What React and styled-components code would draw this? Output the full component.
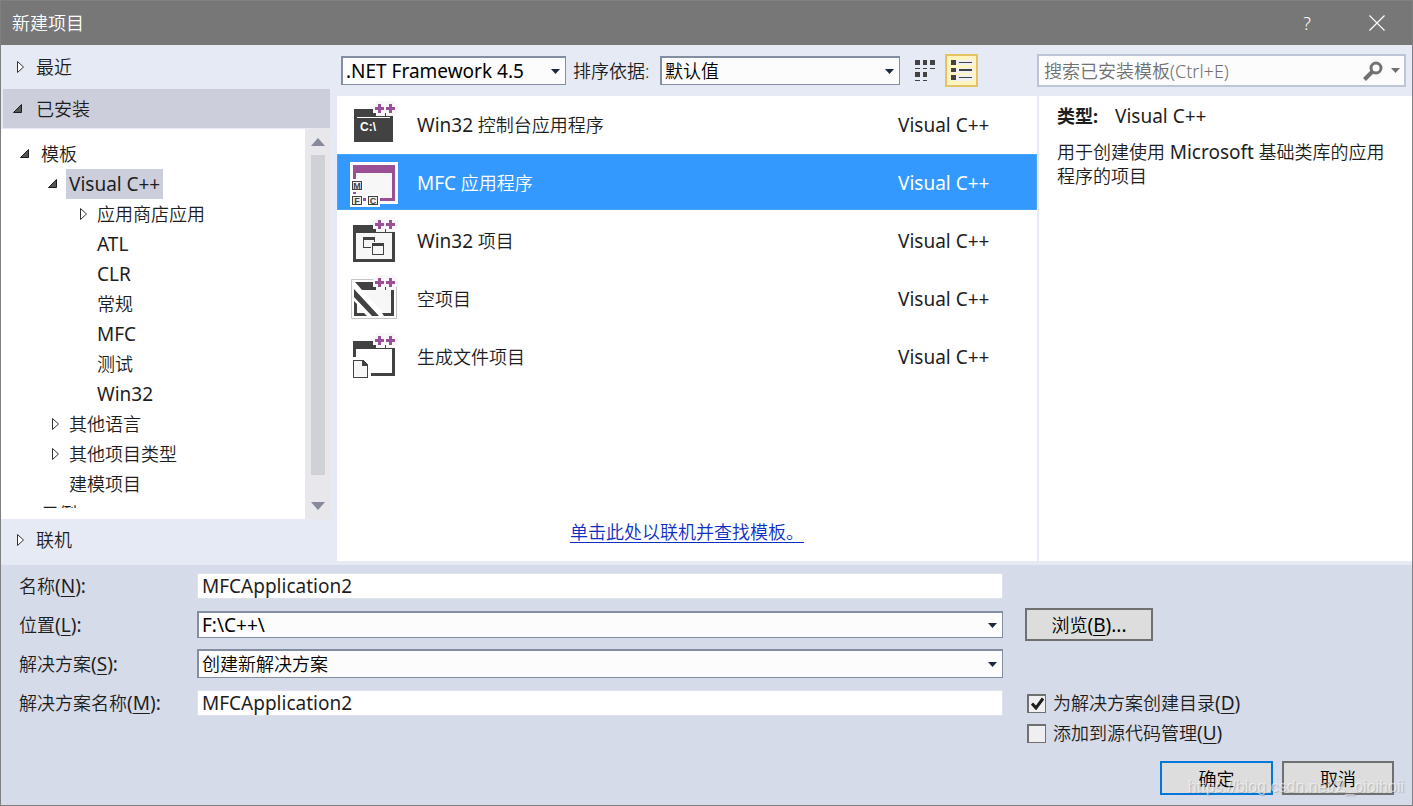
import React from 'react'
import styled, { createGlobalStyle } from 'styled-components'


const GlobalStyle = createGlobalStyle`
  * {
    box-sizing: border-box;
  }

  body {
    margin: 0;
    background: #d5dbe9;
    color: #1e1e1e;
    font-family: "Noto Sans", "Noto Sans CJK SC", sans-serif;
    font-size: 18px;
    font-weight: 350;
    line-height: 24px;
  }

  button, input, select {
    margin: 0;
    font: inherit;
    color: inherit;
  }

  u {
    text-underline-offset: 3px;
    text-decoration-thickness: 1px;
  }
`

const Dialog = styled.div`
  position: relative;
  display: flex;
  flex-direction: column;
  height: 100vh;
  min-height: 640px;
  min-width: 1100px;
  border: 1px solid #808080;
  background: #e6eaf5;
`

const TitleBar = styled.header`
  display: flex;
  align-items: center;
  flex: 0 0 44px;
  padding-left: 11px;
  background: #777777;
  color: #ffffff;
`

const Title = styled.h1`
  flex: 1;
  margin: 0;
  font-size: 18px;
  font-weight: inherit;
`

const TitleButton = styled.button`
  display: flex;
  align-items: center;
  justify-content: center;
  width: 70px;
  height: 44px;
  padding: 0;
  border: none;
  background: none;
  color: #ffffff;
`

const Main = styled.main`
  display: grid;
  grid-template-columns: 336px 1fr 375px;
  flex: 1;
  min-height: 0;
  padding-bottom: 4px;
`

const Sidebar = styled.nav`
  display: flex;
  flex-direction: column;
  min-height: 0;
  padding-right: 6px;
`

const Section = styled.button`
  display: flex;
  align-items: center;
  flex: 0 0 ${({ $height }) => $height}px;
  gap: 11px;
  margin: 0 1px 0 2px;
  padding: 0 0 0 8px;
  border: none;
  background: ${({ $open }) => ($open ? '#cccedb' : 'transparent')};
  text-align: left;
`

const TreePane = styled.div`
  display: flex;
  flex: 1;
  min-height: 0;
  margin-top: 1px;
  background: #ffffff;
`

const Tree = styled.ul`
  flex: 1;
  margin: 0 0 11px;
  padding: 10px 0 0;
  overflow: hidden;
  list-style: none;
`

const TreeItem = styled.li`
  display: flex;
  align-items: center;
  height: 30px;
  padding-left: ${({ $level }) => 17 + $level * 28}px;
`

const TreeLabel = styled.span`
  display: flex;
  align-items: center;
  height: 30px;
  padding: 0 3px;
  margin-left: 6px;
  background: ${({ $active }) => ($active ? '#cccedb' : 'transparent')};
`

const Latin = styled.span`
  font-size: 19px;
  font-weight: 400;
`

const ScrollBar = styled.div`
  display: flex;
  flex-direction: column;
  align-items: center;
  width: 26px;
  background: #e8e8ec;
`

const ScrollThumb = styled.div`
  flex: 1;
  width: 14px;
  background: #d0d1d7;
`

const ScrollArrow = styled.div`
  display: flex;
  align-items: center;
  justify-content: center;
  height: 26px;
  margin-top: ${({ $gap }) => $gap || 0}px;
`

const Column = styled.section`
  display: flex;
  flex-direction: column;
  min-width: 0;
  min-height: 0;
`

const Toolbar = styled.div`
  display: flex;
  align-items: center;
  flex: 0 0 51px;
  padding: 0 6px 0 ${({ $left }) => $left}px;
`

const SelectWrapper = styled.div`
  position: relative;
  display: flex;
  width: ${({ $width }) => $width};
`

const SelectBox = styled.select`
  width: 100%;
  height: ${({ $height }) => $height || 29}px;
  padding: 0 24px 0 3px;
  border: 1px solid #848ea3;
  border-top-width: 2px;
  border-left-width: 2px;
  border-radius: 0;
  outline: none;
  appearance: none;
  background: #fcfcfc;
  color: #000000;
  font-size: ${({ $latin }) => ($latin ? 19 : 18)}px;
  font-weight: ${({ $latin }) => ($latin ? 400 : 350)};
  line-height: 24px;
`

const SelectArrow = styled.svg`
  position: absolute;
  top: 50%;
  right: 6px;
  margin-top: -2px;
  pointer-events: none;
`

const SortLabel = styled.label`
  width: 94px;
  padding-left: 7px;
  white-space: nowrap;
`

const ViewButton = styled.button`
  display: flex;
  align-items: center;
  justify-content: center;
  width: 33px;
  height: 33px;
  margin-left: ${({ $active }) => ($active ? 4 : 8)}px;
  padding: 0;
  border: 2px solid ${({ $active }) => ($active ? '#e5c365' : 'transparent')};
  background: ${({ $active }) => ($active ? '#fdf4bf' : 'transparent')};
`

const SearchBox = styled.div`
  display: flex;
  align-items: center;
  flex: 1;
  height: 33px;
  padding-right: 4px;
  border: 2px solid #bcc5d6;
  background: #fcfcfc;
`

const SearchInput = styled.input`
  flex: 1;
  min-width: 0;
  padding: 0 5px;
  border: none;
  outline: none;
  background: none;

  &::placeholder {
    color: #717171;
    opacity: 1;
  }
`

const SearchButton = styled.button`
  display: flex;
  align-items: center;
  gap: 8px;
  padding: 0;
  border: none;
  background: none;
`

const TemplatePane = styled.div`
  display: flex;
  flex: 1;
  flex-direction: column;
  justify-content: space-between;
  align-items: center;
  background: #ffffff;
`

const TemplateList = styled.ul`
  width: 100%;
  margin: 0;
  padding: 0;
  list-style: none;
`

const TemplateRow = styled.li`
  display: grid;
  grid-template-columns: 48px 1fr 126px;
  align-items: center;
  column-gap: 19px;
  height: 56px;
  margin-bottom: 2px;
  padding: 4px 12px;
  border: 1px solid ${({ $selected }) => ($selected ? '#4aa3ff' : 'transparent')};
  background: ${({ $selected }) => ($selected ? '#3399ff' : 'transparent')};
  color: ${({ $selected }) => ($selected ? '#ffffff' : '#1e1e1e')};
`

const TemplateIcon = styled.svg`
  display: block;
  width: 48px;
  height: 48px;
`

const OnlineLink = styled.a`
  margin-bottom: 17px;
  color: #0e2fc4;
  text-decoration: underline;
  text-decoration-thickness: 1px;
  text-underline-offset: 3px;
`

const Details = styled.div`
  flex: 1;
  margin-left: 2px;
  padding: 8px 18px;
  background: #ffffff;
`

const DetailType = styled.p`
  display: flex;
  gap: 17px;
  margin: 0 0 12px;
`

const DetailText = styled.p`
  margin: 0;
`

const Footer = styled.form`
  flex: none;
  padding: 1px 18px 10px;
  background: #d5dbe9;
`

const Fields = styled.div`
  display: grid;
  grid-template-columns: 178px 1fr 391px;
  grid-template-rows: repeat(4, 39px) 26px;
  align-items: center;
`

const FieldLabel = styled.label`
  grid-column: 1;
`

const FieldCell = styled.div`
  grid-column: 2;
  display: flex;
`

const SideCell = styled.div`
  grid-column: 3;
  grid-row: ${({ $row }) => $row};
  align-self: ${({ $align }) => $align || 'center'};
  padding-left: 22px;
`

const TextBox = styled.input`
  width: 100%;
  height: 26px;
  padding: 0 4px;
  border: 1px solid #dde1ea;
  border-radius: 0;
  outline: none;
  background: #ffffff;
  font-size: 19px;
  font-weight: 400;
  line-height: 24px;
`

const PushButton = styled.button`
  width: ${({ $width }) => $width}px;
  height: ${({ $height }) => $height || 34}px;
  padding: 1px 0 0;
  border: 2px solid ${({ $primary }) => ($primary ? '#0078d7' : '#707070')};
  background: #dddddd;
  color: #000000;
`

const CheckRow = styled.label`
  display: flex;
  align-items: center;
  gap: 7px;
  height: 30px;
  padding-left: 2px;
`

const CheckMark = styled.span`
  position: relative;
  display: flex;
  width: 19px;
  height: 19px;

  svg {
    position: absolute;
    top: 3px;
    left: 4px;
    pointer-events: none;
  }
`

const CheckInput = styled.input`
  width: 19px;
  height: 19px;
  border: 1px solid #707070;
  border-top-width: 2px;
  border-left-width: 2px;
  appearance: none;
  background: #efeff2;
`

const Actions = styled.div`
  display: flex;
  justify-content: flex-end;
  gap: 9px;
  margin-top: 13px;
`

const Watermark = styled.span`
  position: absolute;
  right: 8px;
  bottom: 6px;
  color: rgba(255, 255, 255, 0.55);
  font-family: "Liberation Sans", Arial, sans-serif;
  font-size: 16px;
  text-shadow: 1px 1px 1px rgba(120, 120, 120, 0.4);
  pointer-events: none;
`

const TREE = [
  { label: '模板', level: 0, state: 'open' },
  { label: 'Visual C++', level: 1, state: 'open', active: true },
  { label: '应用商店应用', level: 2, state: 'closed' },
  { label: 'ATL', level: 2 },
  { label: 'CLR', level: 2 },
  { label: '常规', level: 2 },
  { label: 'MFC', level: 2 },
  { label: '测试', level: 2 },
  { label: 'Win32', level: 2 },
  { label: '其他语言', level: 1, state: 'closed' },
  { label: '其他项目类型', level: 1, state: 'closed' },
  { label: '建模项目', level: 1 },
  { label: '示例', level: 0 },
]

// latin letters are set one size up so they sit evenly beside the chinese
const MixedText = ({ text }) =>
  text.split(/([\x21-\x7e]+)/).map((part, i) => (i % 2 ? <Latin key={i}>{part}</Latin> : part))

const Mnemonic = ({ text, letter, end }) => (
  <span>{text}<Latin>(<u>{letter}</u>){end}</Latin></span>
)

const Expander = ({ state }) => (
  <svg width="14" height="14" viewBox="0 0 14 14">
    {state === 'open' && <path d="M10.5 2.5v8h-8z" fill="#555" stroke="#1e1e1e" />}
    {state === 'closed' && <path d="M6.500 1.500v11l6-5.500z" fill="#fff" stroke="#333" />}
  </svg>
)

const Chevron = ({ color = '#1b293e' }) => (
  <SelectArrow width="9" height="5" viewBox="0 0 9 5">
    <path d="M0 0h9L4.500 5z" fill={color} />
  </SelectArrow>
)

const Combo = ({ id, value, width, height, latin, label }) => (
  <SelectWrapper $width={width}>
    <SelectBox id={id} aria-label={label} $height={height} $latin={latin} defaultValue={value}>
      <option>{value}</option>
    </SelectBox>
    <Chevron />
  </SelectWrapper>
)

const Pluses = () => (
  <>
    <path d="M23 3h3V0h9v3h1V0h9v3h3v9h-3v3h-9v-3h-1v3h-9v-3h-3z" fill="#f7f7f7" />
    <path d="M28 3h3v3h3v3h-3v3h-3v-3h-3v-3h3zM39 3h3v3h3v3h-3v3h-3v-3h-3v-3h3z" fill="#9b4f96" />
  </>
)

const ConsoleIcon = () => (
  <TemplateIcon viewBox="0 0 48 48" shapeRendering="crispEdges">
    <path d="M4 8h39v33H4z" fill="#424242" />
    <path d="M7 16h33v1H7z" fill="#fff" />
    <text x="10" y="30" fill="#fff" fontFamily="Liberation Sans" fontWeight="700" fontSize="12">C:\</text>
    <Pluses />
  </TemplateIcon>
)

const MfcLetter = ({ x, y, letter }) => (
  <>
    <path d={`M${x} ${y}h10v9h-10z`} fill="#424242" />
    <path d={`M${x + 1} ${y + 1}h8v7h-8z`} fill="#f0eff1" />
    <text x={x + 5} y={y + 8} textAnchor="middle" fill="#424242" fontFamily="Liberation Sans" fontWeight="700" fontSize="9">{letter}</text>
  </>
)

const MfcIcon = () => (
  <TemplateIcon viewBox="0 0 48 48" shapeRendering="crispEdges">
    <path d="M0 3h48v42H30v3H0z" fill="#fff" />
    <path d="M3 6h42v36H3z" fill="#9b4f96" />
    <path d="M6 14h36v25H6z" fill="#f7f7f7" />
    <path d="M0 20h13v13H0zM0 35h13v13H0zM16 35h14v13H16z" fill="#fff" />
    <MfcLetter x={2} y={22} letter="M" />
    <MfcLetter x={2} y={37} letter="F" />
    <MfcLetter x={18} y={37} letter="C" />
  </TemplateIcon>
)

const Win32Icon = () => (
  <TemplateIcon viewBox="0 0 48 48" shapeRendering="crispEdges">
    <path d="M3 8h42v37H3z" fill="#424242" />
    <path d="M6 16h36v26H6z" fill="#f7f7f7" />
    <path d="M13 20h12v11H13z" fill="#424242" />
    <path d="M14 23h10v7H14z" fill="#f7f7f7" />
    <path d="M21 25h14v14H21z" fill="#f7f7f7" />
    <path d="M22 26h12v12H22z" fill="#424242" />
    <path d="M23 29h10v8H23z" fill="#f7f7f7" />
    <Pluses />
  </TemplateIcon>
)

const EmptyIcon = () => (
  <TemplateIcon viewBox="0 0 48 48">
    <path d="M1.500 4.500h45v39h-45z" fill="#fff" stroke="#c4c4c4" />
    <path d="M5 7h39v34H34l-2-3h9V15H12z" fill="#424242" />
    <path d="M12 15h29v23h-8z" fill="#f7f7f7" />
    <path d="M4 26v15h13l-3-3H7v-9z" fill="#424242" />
    <path d="M7 29v9h7z" fill="#f7f7f7" />
    <path d="M4 14v8l18 19h7z" fill="#424242" />
    <Pluses />
  </TemplateIcon>
)

const MakefileIcon = () => (
  <TemplateIcon viewBox="0 0 48 48" shapeRendering="crispEdges">
    <path d="M3 8h42v35H21v-3h21V16H6v8H3z" fill="#424242" />
    <path d="M3 27h10l5 5v13H3z" fill="#424242" />
    <path d="M4 28h8v5h5v11H4z" fill="#f7f7f7" />
    <Pluses />
  </TemplateIcon>
)

const TEMPLATES = [
  { name: 'Win32 控制台应用程序', Icon: ConsoleIcon },
  { name: 'MFC 应用程序', Icon: MfcIcon, selected: true },
  { name: 'Win32 项目', Icon: Win32Icon },
  { name: '空项目', Icon: EmptyIcon },
  { name: '生成文件项目', Icon: MakefileIcon },
]

const App = () => {
  return (
    <Dialog>
      <GlobalStyle />

      <TitleBar>
        <Title>新建项目</Title>
        <TitleButton type="button" aria-label="帮助">?</TitleButton>
        <TitleButton type="button" aria-label="关闭">
          <svg width="16" height="16" viewBox="0 0 16 16">
            <path d="M.5.5l15 15M15.500.5l-15 15" stroke="#fff" strokeWidth="1.200" />
          </svg>
        </TitleButton>
      </TitleBar>

      <Main>
        <Sidebar>
          <Section type="button" $height={44}><Expander state="closed" />最近</Section>
          <Section type="button" $height={39} $open><Expander state="open" />已安装</Section>
          <TreePane>
            <Tree>
              {TREE.map(({ label, level, state, active }) => (
                <TreeItem key={label} $level={level}>
                  <Expander state={state} />
                  <TreeLabel $active={active}>
                    <span><MixedText text={label} /></span>
                  </TreeLabel>
                </TreeItem>
              ))}
            </Tree>
            <ScrollBar>
              <ScrollArrow>
                <svg width="14" height="8" viewBox="0 0 14 8"><path d="M0 8l7-8 7 8z" fill="#868999" /></svg>
              </ScrollArrow>
              <ScrollThumb />
              <ScrollArrow $gap={18}>
                <svg width="14" height="8" viewBox="0 0 14 8"><path d="M0 0l7 8 7-8z" fill="#868999" /></svg>
              </ScrollArrow>
            </ScrollBar>
          </TreePane>
          <Section type="button" $height={42}><Expander state="closed" />联机</Section>
        </Sidebar>

        <Column>
          <Toolbar $left={4}>
            <Combo label="框架" value=".NET Framework 4.5" width="225px" latin />
            <SortLabel htmlFor="sort">排序依据:</SortLabel>
            <Combo id="sort" value="默认值" width="240px" />
            <ViewButton type="button" aria-label="小图标">
              <svg width="20" height="21" viewBox="0 0 20 21" shapeRendering="crispEdges">
                <path d="M0 0h5v5H0zM8 0h4v5H8zM15 0h5v5h-5zM0 8h5v1H0zM8 8h4v1H8zM15 8h5v1h-5zM0 12h5v5H0zM8 12h4v5H8zM0 20h5v1H0zM8 20h4v1H8z" fill="#424242" />
              </svg>
            </ViewButton>
            <ViewButton type="button" aria-label="列表" $active>
              <svg width="21" height="21" viewBox="0 0 21 21" shapeRendering="crispEdges" overflow="visible">
                <path d="M0 0h23v5H0zM0 8h23v5H0zM0 15h23v6H0z" fill="#f0eff1" />
                <path d="M0 0h5v5H0zM0 8h5v4H0zM0 15h5v5H0zM8 2h13v1H8zM8 9h13v2H8zM8 17h13v1H8z" fill="#424242" />
              </svg>
            </ViewButton>
          </Toolbar>
          <TemplatePane>
            <TemplateList>
              {TEMPLATES.map(({ name, Icon, selected }) => (
                <TemplateRow key={name} $selected={selected}>
                  <Icon />
                  <span><MixedText text={name} /></span>
                  <Latin>Visual C++</Latin>
                </TemplateRow>
              ))}
            </TemplateList>
            <OnlineLink href="#online">单击此处以联机并查找模板。</OnlineLink>
          </TemplatePane>
        </Column>

        <Column>
          <Toolbar $left={0}>
            <SearchBox>
              <SearchInput aria-label="搜索" placeholder="搜索已安装模板(Ctrl+E)" />
              <SearchButton type="button" aria-label="搜索选项">
                <svg width="20" height="20" viewBox="0 0 20 20" fill="none" stroke="#717171">
                  <circle cx="13" cy="7" r="5" strokeWidth="3" />
                  <path d="M9.500 10.500L1.500 18.500" strokeWidth="4" />
                </svg>
                <svg width="9" height="5" viewBox="0 0 9 5"><path d="M0 0h9L4.500 5z" fill="#717171" /></svg>
              </SearchButton>
            </SearchBox>
          </Toolbar>
          <Details>
            <DetailType><b>类型:</b><Latin>Visual C++</Latin></DetailType>
            <DetailText><MixedText text="用于创建使用 Microsoft 基础类库的应用程序的项目" /></DetailText>
          </Details>
        </Column>
      </Main>

      <Footer onSubmit={(e) => e.preventDefault()}>
        <Fields>
          <FieldLabel htmlFor="name"><Mnemonic text="名称" letter="N" end=":" /></FieldLabel>
          <FieldCell>
            <TextBox id="name" defaultValue="MFCApplication2" />
          </FieldCell>

          <FieldLabel htmlFor="location"><Mnemonic text="位置" letter="L" end=":" /></FieldLabel>
          <FieldCell>
            <Combo id="location" value="F:\C++\" width="100%" height={27} latin />
          </FieldCell>
          <SideCell $row="2">
            <PushButton type="button" $width={128} $height={33}>
              <Mnemonic text="浏览" letter="B" end="..." />
            </PushButton>
          </SideCell>

          <FieldLabel htmlFor="solution"><Mnemonic text="解决方案" letter="S" end=":" /></FieldLabel>
          <FieldCell>
            <Combo id="solution" value="创建新解决方案" width="100%" />
          </FieldCell>

          <FieldLabel htmlFor="solutionName"><Mnemonic text="解决方案名称" letter="M" end=":" /></FieldLabel>
          <FieldCell>
            <TextBox id="solutionName" defaultValue="MFCApplication2" />
          </FieldCell>
          <SideCell $row="4 / span 2" $align="end">
            <CheckRow>
              <CheckMark>
                <CheckInput type="checkbox" defaultChecked />
                <svg width="13" height="13" viewBox="0 0 13 13">
                  <path d="M1 6.500L5 11 12 1.500" fill="none" stroke="#1e1e1e" strokeWidth="3" />
                </svg>
              </CheckMark>
              <Mnemonic text="为解决方案创建目录" letter="D" />
            </CheckRow>
            <CheckRow>
              <CheckMark>
                <CheckInput type="checkbox" />
              </CheckMark>
              <Mnemonic text="添加到源代码管理" letter="U" />
            </CheckRow>
          </SideCell>
        </Fields>
        <Actions>
          <PushButton type="submit" $width={113} $primary>确定</PushButton>
          <PushButton type="button" $width={112}>取消</PushButton>
        </Actions>
      </Footer>

      <Watermark>https://blog.csdn.net/Z_oioihoii</Watermark>
    </Dialog>
  )
}

export default App
